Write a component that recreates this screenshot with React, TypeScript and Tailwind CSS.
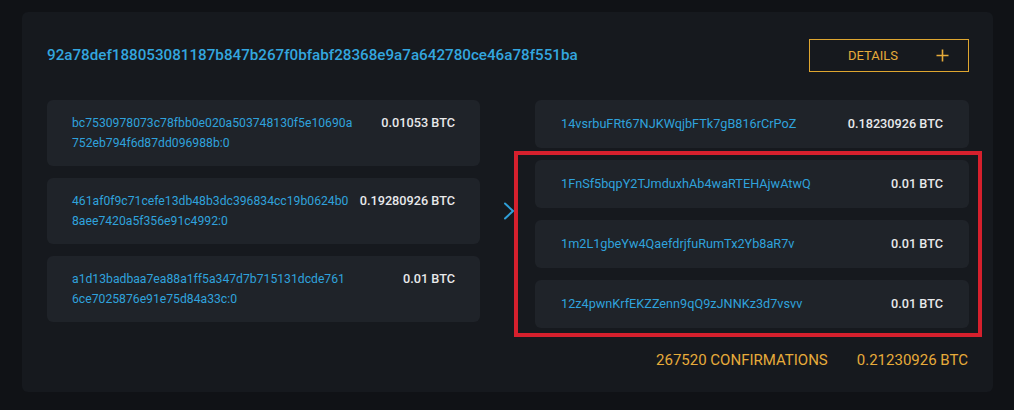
import React from 'react';

const TX_HASH = '92a78def188053081187b847b267f0bfabf28368e9a7a642780ce46a78f551ba';

const INPUTS = [
  { lines: ['bc7530978073c78fbb0e020a503748130f5e10690a', '752eb794f6d87dd096988b:0'], amount: '0.01053 BTC' },
  { lines: ['461af0f9c71cefe13db48b3dc396834cc19b0624b0', '8aee7420a5f356e91c4992:0'], amount: '0.19280926 BTC' },
  { lines: ['a1d13badbaa7ea88a1ff5a347d7b715131dcde761', '6ce7025876e91e75d84a33c:0'], amount: '0.01 BTC' },
];

const OUTPUTS = [
  { address: '14vsrbuFRt67NJKWqjbFTk7gB816rCrPoZ', amount: '0.18230926 BTC' },
  { address: '1FnSf5bqpY2TJmduxhAb4waRTEHAjwAtwQ', amount: '0.01 BTC' },
  { address: '1m2L1gbeYw4QaefdrjfuRumTx2Yb8aR7v', amount: '0.01 BTC' },
  { address: '12z4pwnKrfEKZZenn9qQ9zJNNKz3d7vsvv', amount: '0.01 BTC' },
];

function InputRow({ lines, amount }: { lines: string[]; amount: string }) {
  return (
    <div className="flex h-[66px] justify-between rounded-md bg-[#1f2329] pl-[25px] pr-[25px] pt-[13px]">
      <div className="text-[12.2px] leading-[20px] text-[#2fa2dc]">
        {lines.map((l) => (
          <div key={l}>{l}</div>
        ))}
      </div>
      <div className="text-[12.7px] font-medium leading-[20px] text-[#e8e9eb]">{amount}</div>
    </div>
  );
}

function OutputRow({ address, amount }: { address: string; amount: string }) {
  return (
    <div className="flex h-[48px] items-center justify-between rounded-md bg-[#1f2329] pl-[26px] pr-[26px]">
      <div className="text-[12.7px] text-[#2fa2dc]">{address}</div>
      <div className="text-[12.7px] font-medium text-[#e8e9eb]">{amount}</div>
    </div>
  );
}

export default function App() {
  return (
    <div
      className="h-[410px] w-[1014px] bg-[#101216] pl-[22px] pt-[12px]"
      style={{ fontFamily: 'Roboto, "Liberation Sans", sans-serif' }}
    >
      <div className="h-[380px] w-[971px] rounded-md bg-[#16191e] pl-[25px] pr-[24px] pt-[27px]">
        {/* header */}
        <div className="flex h-[33px] items-center justify-between">
          <div className="text-[15.2px] font-medium text-[#33a6df]">{TX_HASH}</div>
          <button className="flex h-[33px] w-[160px] items-center border border-[#dfa630] pl-[38px] pr-[19px] text-[13px] text-[#e6ab3a]">
            <span>DETAILS</span>
            <svg className="ml-auto" width="13" height="13" viewBox="0 0 13 13" fill="none">
              <path d="M6.5 0.5v12M0.5 6.5h12" stroke="#e6ab3a" strokeWidth="1.6" />
            </svg>
          </button>
        </div>

        {/* inputs / outputs */}
        <div className="mt-[28px] flex">
          <div className="flex w-[433px] flex-col gap-[12px]">
            {INPUTS.map((r) => (
              <InputRow key={r.amount + r.lines[0]} lines={r.lines} amount={r.amount} />
            ))}
          </div>

          <div className="flex w-[55px] items-start justify-center pt-[102px] pl-[2px]">
            <svg width="12" height="18" viewBox="0 0 12 18" fill="none">
              <path d="M2 1.5l8 7.5-8 7.5" stroke="#2f9fd8" strokeWidth="2" strokeLinecap="round" strokeLinejoin="round" />
            </svg>
          </div>

          <div className="relative flex w-[434px] flex-col gap-[12px]">
            {OUTPUTS.map((r) => (
              <OutputRow key={r.address} address={r.address} amount={r.amount} />
            ))}
            {/* highlight box */}
            <div className="pointer-events-none absolute left-[-21px] top-[51px] h-[186px] w-[468px] border-[4px] border-[#d6202d]" />
          </div>
        </div>

        {/* footer */}
        <div className="mt-[22px] flex justify-end gap-[29px] pr-[1px] text-[15px] leading-[20px] text-[#e6ab3a]">
          <span>267520 CONFIRMATIONS</span>
          <span>0.21230926 BTC</span>
        </div>
      </div>
    </div>
  );
}
